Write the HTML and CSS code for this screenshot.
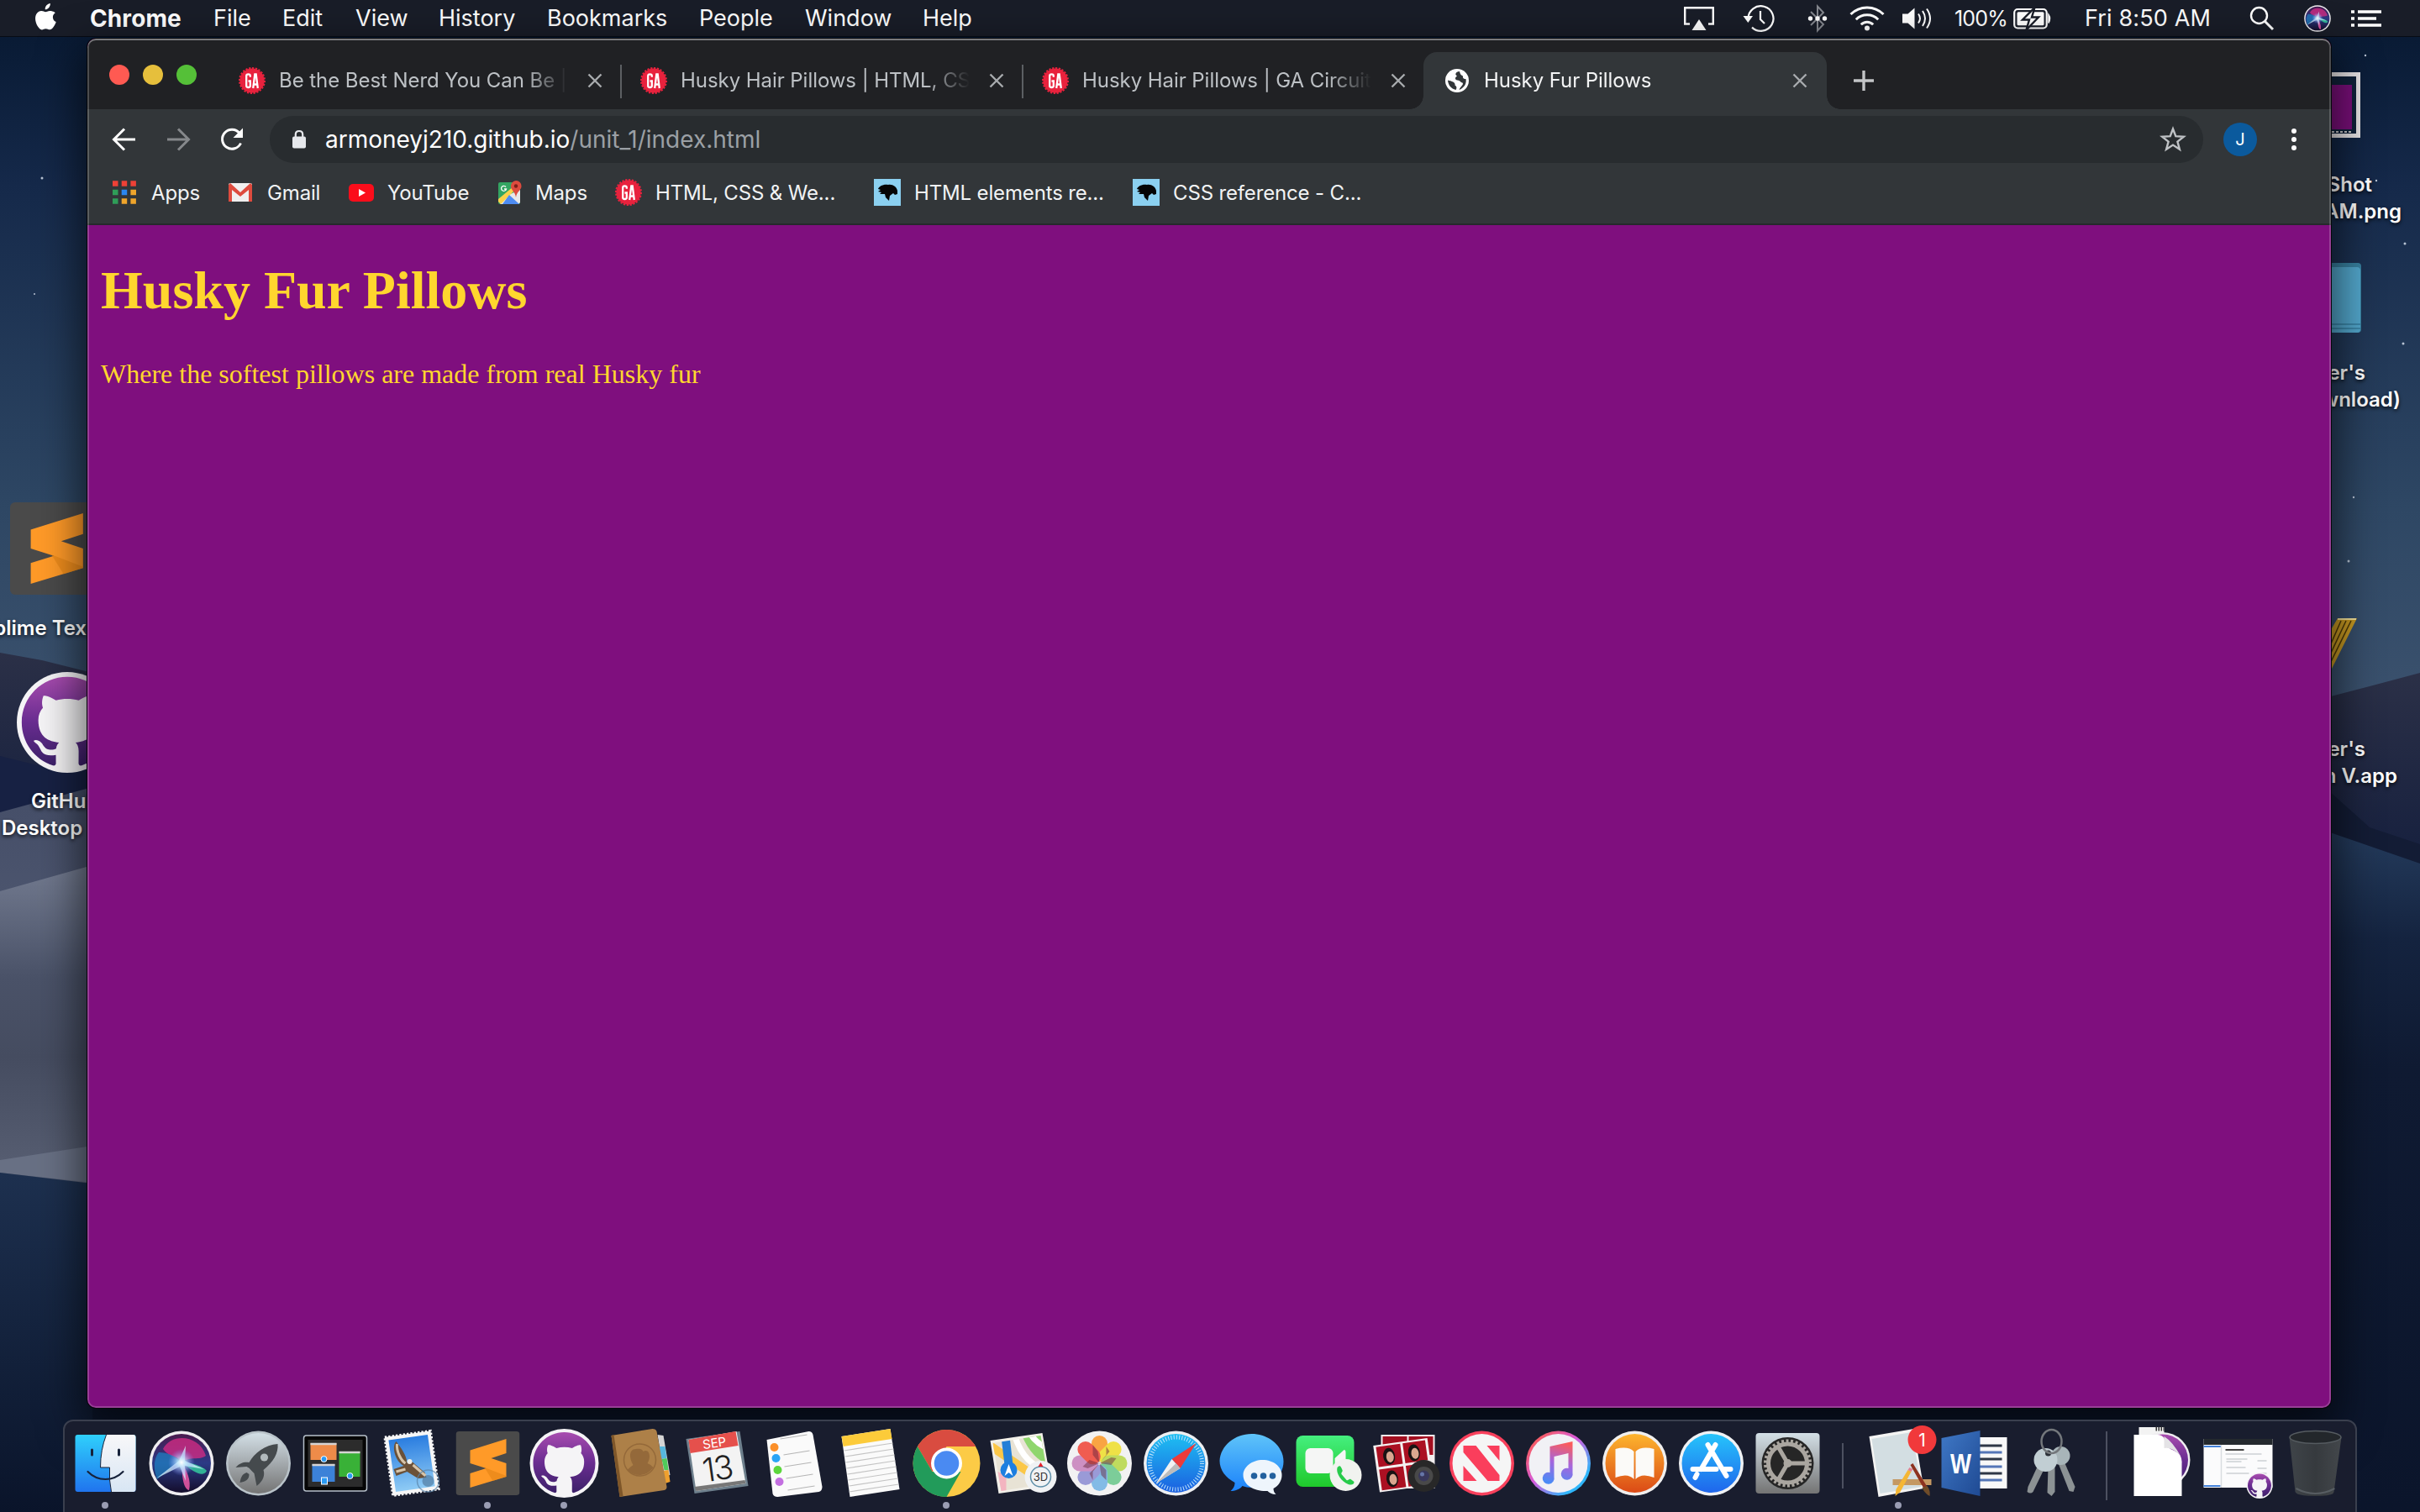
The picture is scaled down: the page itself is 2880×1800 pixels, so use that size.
FILE: index.html
```html
<!DOCTYPE html>
<html lang="en">
<head>
<meta charset="utf-8">
<title>Husky Fur Pillows</title>
<link rel="stylesheet" href="styles.css">
</head>
<body>
<svg class="defs" width="0" height="0">
  <defs>
    <linearGradient id="finderBlue" x1="0" y1="0" x2="0" y2="1"><stop offset="0" stop-color="#2fd0fc"/><stop offset="1" stop-color="#2074ee"/></linearGradient>
    <linearGradient id="finderWhite" x1="0" y1="0" x2="0" y2="1"><stop offset="0" stop-color="#f8f7f9"/><stop offset="1" stop-color="#d8e6f4"/></linearGradient>
    <linearGradient id="silver" x1="0" y1="0" x2="0" y2="1"><stop offset="0" stop-color="#d3dfe6"/><stop offset="1" stop-color="#747474"/></linearGradient>
    <linearGradient id="purple" x1="0" y1="0" x2="0" y2="1"><stop offset="0" stop-color="#a84caf"/><stop offset=".5" stop-color="#6a2d91"/><stop offset="1" stop-color="#3c2069"/></linearGradient>
    <linearGradient id="sky" x1="0" y1="0" x2="0" y2="1"><stop offset="0" stop-color="#2a7de0"/><stop offset="1" stop-color="#8ecbf5"/></linearGradient>
    <linearGradient id="orangeBook" x1="0" y1="0" x2="0" y2="1"><stop offset="0" stop-color="#fdb52e"/><stop offset="1" stop-color="#db4a16"/></linearGradient>
    <linearGradient id="store" x1="0" y1="0" x2="0" y2="1"><stop offset="0" stop-color="#26c4fb"/><stop offset="1" stop-color="#1f66ec"/></linearGradient>
    <linearGradient id="msg" x1="0" y1="0" x2="0" y2="1"><stop offset="0" stop-color="#5fc4f9"/><stop offset="1" stop-color="#1b82fb"/></linearGradient>
    <linearGradient id="face" x1="0" y1="0" x2="0" y2="1"><stop offset="0" stop-color="#45ef7f"/><stop offset="1" stop-color="#1fc92b"/></linearGradient>
    <linearGradient id="ringTunes" x1="0" y1="0" x2="1" y2="1"><stop offset=".1" stop-color="#fb5b52"/><stop offset=".45" stop-color="#d65bdc"/><stop offset=".8" stop-color="#2fb6fb"/></linearGradient>
    <linearGradient id="note" x1=".6" y1="0" x2=".4" y2="1"><stop offset="0" stop-color="#fb5b5b"/><stop offset=".5" stop-color="#a566dd"/><stop offset="1" stop-color="#4a8bf6"/></linearGradient>
    <linearGradient id="trash" x1="0" y1="0" x2="1" y2="0"><stop offset="0" stop-color="#3f4449"/><stop offset=".5" stop-color="#363a3e"/><stop offset="1" stop-color="#43474b"/></linearGradient>
    <linearGradient id="word" x1="0" y1="0" x2="1" y2="1"><stop offset="0" stop-color="#3f78c6"/><stop offset="1" stop-color="#1f4a93"/></linearGradient>
    <linearGradient id="safari" x1="0" y1="0" x2="0" y2="1"><stop offset="0" stop-color="#1ec0f2"/><stop offset="1" stop-color="#1b5fe0"/></linearGradient>
    <linearGradient id="siri" x1="0" y1="0" x2="0" y2="1"><stop offset="0" stop-color="#4a1b4e"/><stop offset=".5" stop-color="#2b3a86"/><stop offset="1" stop-color="#140d2b"/></linearGradient>
    <radialGradient id="glow" cx=".5" cy=".5" r=".5"><stop offset="0" stop-color="#fff"/><stop offset=".3" stop-color="#c9ecff" stop-opacity=".8"/><stop offset="1" stop-color="#7f8cff" stop-opacity="0"/></radialGradient>
    <symbol id="github" viewBox="0 0 82 82" overflow="visible">
      <circle cx="41" cy="41" r="41" fill="#f5f4f6"/>
      <path transform="translate(4 4) scale(4.625)" fill="url(#purple)" d="M8 0C3.58 0 0 3.58 0 8c0 3.54 2.29 6.53 5.47 7.59.4.07.55-.17.55-.38 0-.19-.01-.82-.01-1.49-2.01.37-2.53-.49-2.69-.94-.09-.23-.48-.94-.82-1.13-.28-.15-.68-.52-.01-.53.63-.01 1.08.58 1.23.82.72 1.21 1.87.87 2.33.66.07-.52.28-.87.51-1.07-1.78-.2-3.64-.89-3.64-3.95 0-.87.31-1.59.82-2.15-.08-.2-.36-1.02.08-2.12 0 0 .67-.21 2.2.82.64-.18 1.32-.27 2-.27.68 0 1.36.09 2 .27 1.53-1.04 2.2-.82 2.2-.82.44 1.1.16 1.92.08 2.12.51.56.82 1.27.82 2.15 0 3.07-1.87 3.75-3.65 3.95.29.25.54.73.54 1.48 0 1.07-.01 1.93-.01 2.2 0 .21.15.46.55.38A8.013 8.013 0 0016 8c0-4.42-3.58-8-8-8z"/>
    </symbol>
    <symbol id="siriball" viewBox="0 0 78 78" overflow="visible">
      <circle cx="39" cy="39" r="38.500" fill="#efeef0"/>
      <circle cx="39" cy="39" r="35" fill="url(#siri)"/>
      <path d="M17 22C26 3 60 4 68 30 60 36 50 30 39 38 34 28 26 34 17 22z" fill="#d92c86" opacity=".75"/>
      <path d="M38 38C24 44 14 56 10 58 6 48 5 34 12 26 22 26 32 30 38 38z" fill="#1f83c4" opacity=".7"/>
      <path d="M40 38c10 0 24 4 29 10-4 8-16 2-29-10z" fill="#34d3a0" opacity=".8"/>
      <path d="M39 38c6 8 12 22 9 33-8-2-8-20-9-33z" fill="#ee5aa8" opacity=".85"/>
      <path d="M9 57L36 36 44 18 43 36 66 46 43 42 44 60 37 43z" fill="#d5f4ff" opacity=".75"/>
      <circle cx="39" cy="38" r="16" fill="url(#glow)"/>
    </symbol>
    <symbol id="ga" viewBox="0 0 32 32" overflow="visible">
      <circle cx="16" cy="16" r="14.600" fill="#e8223d"/>
      <circle cx="16" cy="16" r="15" fill="none" stroke="#e8223d" stroke-width="2" stroke-dasharray="2.300 1.600"/>
      <g fill="none" stroke="#fff" stroke-width="2.300"><path d="M13.800 11.800V10.400Q13.800 8.300 11.500 8.300T9.200 10.400V22Q9.200 24 11.500 24T13.800 22V16.500H11.500"/><path d="M17.200 25L19.300 8.500H20.700L22.800 25M18 20.500H22"/></g>
    </symbol>
    <symbol id="mdn" viewBox="0 0 32 32">
      <rect width="32" height="32" fill="#8bd0f0"/>
      <path d="M5 12C6 9 11 6 17 7 22 6 27 9 28 14L28 18 25 19 23 17 19 20 18 26 14 22 13 18 7 18 9 16 5 15 8 13z" fill="#050505"/>
    </symbol>
    <symbol id="sublime" viewBox="0 0 76 76">
      <rect width="76" height="76" rx="4" fill="#4a4a4a"/>
      <path d="M17 22.500L60 9V26L42 32 60 38V54L17 67V50L36 44 17 38z" fill="#ff9a28"/>
      <path d="M34 43L60 53V54L44 59z" fill="#e28314" opacity=".6"/>
    </symbol>
  </defs>
</svg>

<div class="desktop">
  <svg class="wallpaper" viewBox="0 0 2880 1800">
    <defs>
      <linearGradient id="night" x1="0" y1="0" x2="0" y2="1"><stop offset="0" stop-color="#06172f"/><stop offset=".2" stop-color="#15294a"/><stop offset=".55" stop-color="#2e4764"/><stop offset=".8" stop-color="#3d536f"/><stop offset="1" stop-color="#465b76"/></linearGradient>
      <linearGradient id="hill" x1="0" y1="0" x2="0" y2="1"><stop offset="0" stop-color="#2b3047"/><stop offset="1" stop-color="#151f3e"/></linearGradient>
      <linearGradient id="dune" x1="0" y1="0" x2="0" y2="1"><stop offset="0" stop-color="#454e68"/><stop offset="1" stop-color="#5b647b"/></linearGradient>
      <linearGradient id="dune2" x1="0" y1="0" x2="0" y2="1"><stop offset="0" stop-color="#737b90"/><stop offset=".35" stop-color="#4a5268"/><stop offset=".6" stop-color="#454c60"/><stop offset="1" stop-color="#596074"/></linearGradient>
      <linearGradient id="shadeL" x1="0" y1="0" x2="0" y2="1"><stop offset="0" stop-color="#1d304f"/><stop offset="1" stop-color="#0a142a"/></linearGradient>
      <linearGradient id="shadeR" x1="0" y1="0" x2="0" y2="1"><stop offset="0" stop-color="#243b5c"/><stop offset=".16" stop-color="#14233f"/><stop offset=".35" stop-color="#0f1a32"/><stop offset="1" stop-color="#0b152b"/></linearGradient>
    </defs>
    <rect width="2880" height="1100" fill="url(#night)"/>
    <path d="M0 777L50 786 110 801V1000H0z" fill="url(#hill)"/>
    <path d="M0 900L60 915 110 905V1000H0z" fill="#172143"/>
    <path d="M0 967L110 937V1410H0z" fill="url(#dune)"/>
    <path d="M0 1061L110 1030V1410H0z" fill="url(#dune2)"/>
    <path d="M0 1381L110 1364V1408L0 1396z" fill="#687084"/>
    <path d="M0 1396L110 1409V1800H0z" fill="url(#shadeL)"/>
    <path d="M2770 830L2820 817 2880 801V1040L2770 1000z" fill="url(#hill)"/>
    <path d="M2770 940L2820 985 2880 1005V1040L2770 1010z" fill="#131c35"/>
    <path d="M110 1650H2770V990L2880 1028V1800H110z" fill="url(#shadeR)"/>
    <g fill="#b8c4d4"><circle cx="50" cy="212" r="1.500"/><circle cx="2862" cy="290" r="1.500"/><circle cx="2860" cy="409" r="1.500"/><circle cx="2795" cy="668" r="1.500"/><circle cx="41" cy="350" r="1"/><circle cx="2815" cy="66" r="1.200"/><circle cx="2801" cy="592" r="1.200"/><circle cx="2828" cy="215" r="1.200"/></g>
  </svg>

  <svg class="icon sublime-icon" width="110" height="110"><use href="#sublime"/></svg>
  <div class="label sublime-label">Sublime Text</div>
  <svg class="icon github-icon" width="120" height="120"><use href="#github"/></svg>
  <div class="label github-label"><span>GitHub</span><br>Desktop</div>

  <svg class="icon right-icons" viewBox="2700 60 180 760" width="180" height="760">
    <rect x="2700" y="86" width="109" height="78" fill="#e6e3e4"/><rect x="2700" y="91" width="104" height="68" fill="#10223a"/><rect x="2700" y="101" width="99" height="53" fill="#7a0f7a"/>
    <path d="M2700 157H2798" stroke="#c9c9c9" stroke-width="2" stroke-dasharray="3 2"/>
    <rect x="2700" y="313" width="110" height="83" rx="4" fill="#377f9e"/><rect x="2700" y="318" width="109" height="78" rx="4" fill="#52a6cb"/><path d="M2700 386H2809M2700 391H2809" stroke="#357e9f" stroke-width="1.500"/>
    <path d="M2782 736H2805L2768 810V760z" fill="#c89a22"/><path d="M2786 739L2768 780M2792 739L2768 790M2798 739L2768 800" stroke="#4e3a08" stroke-width="1.500"/><path d="M2782 737H2804" stroke="#f6e39a" stroke-width="2"/>
  </svg>
  <div class="label shot-label">Screen Shot<br><span>8.49.50 AM.png</span></div>
  <div class="label folder-label">Jennifer's<br><span>(Download)</span></div>
  <div class="label app-label">Jennifer's<br><span>Design V.app</span></div>
</div>

<header class="menubar">
  <nav class="menus">
    <svg class="apple" width="28" height="34" viewBox="0 0 28 34"><path fill="#fff" d="M19.800 1C20 3 19.300 4.800 18.100 6.200 16.900 7.500 15.300 8.400 13.700 8.300 13.500 6.400 14.400 4.500 15.400 3.300 16.600 2 18.400 1.100 19.800 1zM25.800 12.200C24 13.400 22.900 15 22.900 17.400 22.900 20 24.400 22 26.700 22.900 26.200 24.800 25.100 27 23.700 29 22.500 30.700 21.200 32.300 19.200 32.300 17.300 32.300 16.700 31.200 14.500 31.200 12.300 31.200 11.600 32.300 9.800 32.400 7.900 32.400 6.400 30.500 5.200 28.800 2.600 25.100.7 18.400 3.300 13.800 4.600 11.500 6.900 10.100 9.300 10.100 11.200 10 12.900 11.300 14.100 11.300 15.200 11.300 17.300 9.800 19.700 10 20.700 10 23.800 10.400 25.800 12.200z"/></svg>
    <b>Chrome</b><span>File</span><span>Edit</span><span>View</span><span>History</span><span>Bookmarks</span><span>People</span><span>Window</span><span>Help</span>
  </nav>
  <div class="status">
    <svg width="40" height="32" viewBox="0 0 40 32"><path d="M9 22.500H3.200V3.200H36.800V22.500H31" fill="none" stroke="#fff" stroke-width="2.400"/><path d="M20 17L28.500 30H11.500z" fill="#fff"/></svg>
    <svg width="40" height="34" viewBox="0 0 40 34"><path d="M7.500 17A15 14.800 0 1 1 12 27.600" fill="none" stroke="#fff" stroke-width="2.200"/><path d="M1.500 14H13L7.300 22z" fill="#fff"/><path d="M22 8V18L27 23" fill="none" stroke="#fff" stroke-width="2.200"/></svg>
    <svg width="26" height="34" viewBox="0 0 26 34"><path d="M5 9L20 24 13 31.500V2.500L20 10 5 25" fill="none" stroke="#85888f" stroke-width="2"/><g fill="#fff"><circle cx="4.500" cy="17" r="2.700"/><circle cx="13" cy="17" r="2.700"/><circle cx="21.500" cy="17" r="2.700"/></g></svg>
    <svg width="42" height="32" viewBox="0 0 42 32"><g fill="none" stroke="#fff" stroke-width="3"><path d="M1.500 11A27.500 27.500 0 0 1 40.500 11M7.800 17.300A18.500 18.500 0 0 1 34.200 17.300M13.800 23.200A10 10 0 0 1 28.200 23.200"/></g><circle cx="21" cy="27.500" r="3" fill="#fff"/></svg>
    <svg width="36" height="28" viewBox="0 0 36 28"><path d="M1 8.500H7.500L15.500 1.500V26.500L7.500 19.500H1z" fill="#fff"/><path d="M20 8.500Q24 14 20 19.500M25 5Q31 14 25 23M30 2.500Q38 14 30 25.500" fill="none" stroke="#fff" stroke-width="2"/></svg>
    <span class="pct">100%</span>
    <svg width="46" height="26" viewBox="0 0 46 26"><rect x="1.200" y="2" width="38.500" height="22.500" rx="4" fill="none" stroke="#fff" stroke-width="2.200"/><path d="M42 8.500Q45 13 42 18.500z" fill="#fff" stroke="#fff" stroke-width="1.500"/><rect x="4.500" y="5.300" width="32" height="16" rx="1.500" fill="#fff"/><path d="M25.500 0L11 14.500H19L15.500 26.500 30 11.500H22z" fill="#fff" stroke="#191d28" stroke-width="2.400"/></svg>
    <span class="clock">Fri 8:50 AM</span>
    <svg width="30" height="30" viewBox="0 0 30 30"><circle cx="11.500" cy="11.500" r="9.500" fill="none" stroke="#fff" stroke-width="2.400"/><path d="M18.500 18.500L28 28" stroke="#fff" stroke-width="3"/></svg>
    <svg width="32" height="32"><use href="#siriball"/></svg>
    <svg width="38" height="22" viewBox="0 0 38 22"><path d="M1 3H5M1 11H5M1 19H5M9 3H37M9 11H31M9 19H37" stroke="#fff" stroke-width="3.600"/></svg>
  </div>
</header>

<main class="window">
  <div class="tabstrip">
    <div class="lights"><i class="red"></i><i class="yellow"></i><i class="green"></i></div>
    <div class="tab"><svg width="32" height="32"><use href="#ga"/></svg><span class="title">Be the Best Nerd You Can Be |</span><svg class="x" width="20" height="20"><path d="M2.500 2.500L17.500 17.500M17.500 2.500L2.500 17.500"/></svg></div>
    <div class="tab divided"><svg width="32" height="32"><use href="#ga"/></svg><span class="title">Husky Hair Pillows | HTML, CSS</span><svg class="x" width="20" height="20"><path d="M2.500 2.500L17.500 17.500M17.500 2.500L2.500 17.500"/></svg></div>
    <div class="tab divided"><svg width="32" height="32"><use href="#ga"/></svg><span class="title">Husky Hair Pillows | GA Circuits</span><svg class="x" width="20" height="20"><path d="M2.500 2.500L17.500 17.500M17.500 2.500L2.500 17.500"/></svg></div>
    <div class="tab active"><svg width="32" height="32" viewBox="0 0 32 32"><circle cx="16" cy="16" r="14" fill="#fff"/><path d="M19 5C14 5.500 13 9 16 10.500 13.500 12 13 15 16.500 15.500 20 15.500 20 18.500 22.500 18.500 24.500 21 20 22.500 18.500 27 25 24.500 27.500 19 26.500 14 24 14.500 22.500 13 23 10.500 21 10 19.500 8 19 5zM5 15.500C5.500 21.500 9 25.500 14.500 27 16.500 24 15 22.500 13.500 21.500 14.500 18 9.500 16.500 5 15.500z" fill="#323639"/></svg><span class="title">Husky Fur Pillows</span><svg class="x" width="20" height="20"><path d="M2.500 2.500L17.500 17.500M17.500 2.500L2.500 17.500"/></svg></div>
    <svg class="plus" width="26" height="26"><path d="M13 1V25M1 13H25" stroke="#c3c5c7" stroke-width="3.400"/></svg>
  </div>
  <div class="toolbar">
    <svg class="nav" width="32" height="32" viewBox="0 0 32 32"><path d="M29 16H4M16 3.500L3.500 16 16 28.500" fill="none" stroke="#fff" stroke-width="3"/></svg>
    <svg class="nav" width="32" height="32" viewBox="0 0 32 32"><path d="M3 16H28M16 3.500L28.500 16 16 28.500" fill="none" stroke="#85888b" stroke-width="3"/></svg>
    <svg class="nav" width="32" height="32" viewBox="0 0 32 32"><path d="M26.500 20.500A11.500 11.500 0 1 1 25 8.500" fill="none" stroke="#fff" stroke-width="3"/><path d="M29 2.500V14H17.500z" fill="#fff"/></svg>
    <div class="omnibox">
      <svg width="18" height="24" viewBox="0 0 18 24"><rect x="1" y="8.500" width="16" height="14" rx="2" fill="#e6e8ec"/><path d="M4.800 10V6Q4.800 2 9 2T13.200 6V10" fill="none" stroke="#e6e8ec" stroke-width="2.200"/></svg>
      <span class="url">armoneyj210.github.io<em>/unit_1/index.html</em></span>
      <svg class="star" width="32" height="32" viewBox="0 0 32 32"><path d="M16 3.500L19.300 12.200 28.800 12.700 21.400 18.600 23.900 27.800 16 22.600 8.100 27.800 10.600 18.600 3.200 12.700 12.700 12.200z" fill="none" stroke="#bfc2c5" stroke-width="2.400"/></svg>
    </div>
    <div class="avatar">J</div>
    <svg class="dots" width="8" height="28"><g fill="#fff"><circle cx="4" cy="4" r="3"/><circle cx="4" cy="14" r="3"/><circle cx="4" cy="24" r="3"/></g></svg>
  </div>
  <div class="bookmarks">
    <a class="b1"><svg width="28" height="28" viewBox="0 0 28 28"><path d="M0 3.500H28" stroke="#ee4136" stroke-width="6.500" stroke-dasharray="6.500 4.200"/><path d="M0 14H6.500" stroke="#2f9e58" stroke-width="6.500"/><path d="M10.700 14H17.200" stroke="#2a86f0" stroke-width="6.500"/><path d="M21.400 14H28" stroke="#efa52b" stroke-width="6.500"/><path d="M0 24.500H6.500" stroke="#2f9e58" stroke-width="6.500"/><path d="M10.700 24.500H28" stroke="#efa52b" stroke-width="6.500" stroke-dasharray="6.500 4.200"/></svg>Apps</a>
    <a class="b2"><svg width="28" height="22" viewBox="0 0 28 22"><rect width="28" height="22" rx="2" fill="#f0efef"/><path d="M0 22V2L2 0 14 11 26 0 28 2V22H24V8L14 16 4 8V22z" fill="#dd4b3e"/></svg>Gmail</a>
    <a class="b3"><svg width="30" height="21" viewBox="0 0 30 21"><rect width="30" height="21" rx="5" fill="#fb0d1b"/><path d="M12 6L20 10.500 12 15z" fill="#fff"/></svg>YouTube</a>
    <a class="b4"><svg width="28" height="30" viewBox="0 0 28 30"><rect y="3" width="26" height="26" rx="2" fill="#33a562"/><path d="M26 27V12L12 18 2 29H24z" fill="#e8e8e8"/><path d="M0 26V23L18 8 22 10 3 29z" fill="#fbd14b"/><path d="M13 18L25 29H5z" fill="#4d8cf2"/><path d="M21 1A6.500 6.500 0 0 0 15 8C15 12 20 14 21 21 22 14 27.500 12 27.500 8A6.500 6.500 0 0 0 21 1z" fill="#dd4b3e"/><circle cx="21" cy="7.500" r="2.200" fill="#7c2019"/><path d="M9 8.500A3 3 0 1 0 9.500 11H7" fill="none" stroke="#fff" stroke-width="1.300"/></svg>Maps</a>
    <a class="b5"><svg width="32" height="32"><use href="#ga"/></svg>HTML, CSS &amp; We...</a>
    <a class="b6"><svg width="32" height="32"><use href="#mdn"/></svg>HTML elements re...</a>
    <a class="b7"><svg width="32" height="32"><use href="#mdn"/></svg>CSS reference - C...</a>
  </div>
  <article class="page">
    <h1>Husky Fur Pillows</h1>
    <p>Where the softest pillows are made from real Husky fur</p>
  </article>
</main>

<footer class="dock">
  <div class="slot on"><svg viewBox="-45.500 -52 91 110"><rect x="-36" y="-34" width="72" height="68" rx="3" fill="url(#finderBlue)"/><path d="M1-34Q-6-16-6 5H5Q4 20 7 34H33Q36 34 36 31V-31Q36-34 33-34z" fill="url(#finderWhite)"/><path d="M-16-16V-10M16-16V-10" stroke="#17223a" stroke-width="3" stroke-linecap="round"/><path d="M-21 10Q-12 19 0 19T21 10" fill="none" stroke="#17223a" stroke-width="2.200" stroke-linecap="round"/><path d="M1-34Q-6-16-6 5H5Q4 20 7 34" fill="none" stroke="#17223a" stroke-width="1"/></svg></div>
  <div class="slot"><svg viewBox="-45.500 -52 91 110"><use href="#siriball" x="-39.500" y="-39" width="78" height="78"/></svg></div>
  <div class="slot"><svg viewBox="-45.500 -52 91 110"><circle r="38.500" fill="#b9c3c9"/><circle r="36" fill="url(#silver)"/><path d="M23-23C8-22-5-12-11-1-16-2-22-1-27 5L-14 4Q-11 5-8 9L-5 12-2 27C6 21 8 14 6 8 18-2 24-12 23-23zM-14 11C-20 13-21 18-22 23-16 22-11 20-11 13z" fill="#454a4d"/><circle cx="7" cy="-7" r="4.600" fill="#b2babd"/></svg></div>
  <div class="slot"><svg viewBox="-45.500 -52 91 110"><rect x="-37" y="-33" width="75" height="66" rx="3" fill="#060606" stroke="#b6c0ca" stroke-width="1.500"/><rect x="-32" y="-28" width="65" height="56" fill="#2c2c2c"/><rect x="-29" y="-24" width="31" height="20" fill="#ee8b49"/><rect x="5" y="-14" width="25" height="30" fill="#39b137"/><rect x="-27" y="1" width="27" height="21" fill="#3c82d8"/><path d="M-29-23H2M5-13H30M-27 2H0" stroke="#d6d4d4" stroke-width="2.400"/><g fill="#2a9bf4" stroke="#fff" stroke-width="1"><circle cx="-13" cy="-5" r="3.500"/><circle cx="18" cy="15" r="3.500"/><rect x="-16" y="17" width="7" height="8"/></g></svg></div>
  <div class="slot"><svg viewBox="-45.500 -52 91 110"><g transform="rotate(-8)"><rect x="-27" y="-35" width="55" height="70" fill="#f6f6f6" stroke="#f6f6f6" stroke-width="3" stroke-dasharray="2.400 2"/><rect x="-23" y="-31" width="47" height="62" fill="url(#sky)"/></g><path d="M-18-26C-24-20-19-2-9 3L-21 7-18 15-5 10 8 18 18 17 16 11 2-1C-2-4-4-1-5-1-6-10-12-18-18-26z" fill="#6b5138"/><path d="M-17-23C-18-14-12-3-7 0M2 2L17 15M-18 10L-7 7" stroke="#d7c5aa" stroke-width="3" fill="none"/><circle cx="-2" cy="-2" r="3" fill="#f1efe9"/><circle cx="20" cy="21" r="13" fill="none" stroke="#5b84a8" stroke-width="1.500" opacity=".7"/><circle cx="20" cy="21" r="7" fill="#50789b" opacity=".65"/></svg></div>
  <div class="slot on"><svg viewBox="-45.500 -52 91 110"><use href="#sublime" x="-38" y="-38" width="76" height="76"/></svg></div>
  <div class="slot on"><svg viewBox="-45.500 -52 91 110"><use href="#github" x="-41" y="-41" width="82" height="82"/></svg></div>
  <div class="slot"><svg viewBox="-45.500 -52 91 110"><path d="M20-34L27-33 35 14 28 15z" fill="#d5d5d5"/><path d="M22-20L29-20 31-6 24-5z" fill="#57b7dd"/><path d="M25-5L31-6 33 8 28 8z" fill="#4fca5b"/><path d="M26 9L33 8 35 22 29 24z" fill="#efa02e"/><path d="M-35-33L14-41Q18-41 19-38L31 28Q31 31 28 32L-25 40z" fill="#ad8048"/><path d="M-35-33L-32-34-21 39-25 40z" fill="#7e5629"/><circle cx="-1" cy="-4" r="19" fill="none" stroke="#94693a" stroke-width="1.500"/><path d="M-16 8Q-12 4-9 2C-15-8-13-17-6-17 0-18 2-16 3-14 10-18 13-8 8 0Q13 2 15 5 8 14-1 14-10 14-16 8z" fill="#94693a"/></svg></div>
  <div class="slot"><svg viewBox="-45.500 -52 91 110"><path d="M-37-29L27-38 37 27-27 36z" fill="#6e808d"/><path d="M-34-28L23-38 34 24-25 33z" fill="#f3f3f3"/><path d="M-27 28L33 20 34 24-25 33z" fill="#777"/><path d="M-34-28L22-38 25-21-32-12z" fill="#e5504c"/><g transform="rotate(-8)" text-anchor="middle"><text x="0" y="-19" class="cal-m">SEP</text><text x="-1" y="20" class="cal-d">13</text></g></svg></div>
  <div class="slot"><svg viewBox="-45.500 -52 91 110"><path d="M-32-28L18-38Q22-38 23-34L34 28Q34 33 30 34L-19 40Q-24 40-25 36z" fill="#fafafa"/><path d="M-16-29L16-34M-12-10L19-15M-11 4L21-1M-9 18L23 13M-7 32L25 27" stroke="#b5b5b5" stroke-width="1.200"/><circle cx="-23" cy="-19" r="5" fill="#fb8f29"/><circle cx="-21" cy="-6" r="5" fill="#2aa4f5"/><circle cx="-19" cy="8" r="5" fill="#5cd63c"/><circle cx="-17" cy="22" r="5" fill="#c36fe0"/></svg></div>
  <div class="slot"><svg viewBox="-45.500 -52 91 110"><path d="M-34-32L24-41 35 31-24 40z" fill="#fafafa"/><path d="M-34-32L24-41 26-29-32-20z" fill="#fccb3a"/><path d="M-31-15L27-24M-30-8L28-17M-29-1L29-10M-28 6L30-3M-27 13L31 4M-26 20L32 11M-25 27L33 18M-25 34L34 25" stroke="#c4c4c4" stroke-width="1.200"/></svg></div>
  <div class="slot on"><svg viewBox="-45.500 -52 91 110"><circle r="40" fill="#fccb46"/><path d="M-34.600-20A40 40 0 0 1 34.600-20H0L-17 10z" fill="#d94c40"/><path d="M-34.600-20A40 40 0 0 0 0 40L17 10H-17z" fill="#229b5a"/><circle r="18.500" fill="#fff"/><circle r="14.800" fill="#4a8af2"/></svg></div>
  <div class="slot"><svg viewBox="-45.500 -52 91 110"><path d="M-39-27L23-36 34 27-29 36z" fill="#f2f0e9"/><clipPath id="mapclip"><path d="M-36-24L21-33 31 24-26 33z"/></clipPath><g clip-path="url(#mapclip)"><rect x="-45" y="-45" width="90" height="90" fill="#e8e3d5"/><path d="M-4-40H40V4Q10 0-4-40z" fill="#8fd66d"/><path d="M-12-40Q0 8 40 10M6-40Q15-20 40-15" fill="none" stroke="#fff" stroke-width="7"/><path d="M-45-25L35 30" stroke="#fbc747" stroke-width="10"/><path d="M-22-40L-16 10" stroke="#247fd7" stroke-width="10"/><path d="M-40 5L-20 15V40H-45z" fill="#f3b4c0"/></g><circle cx="-17" cy="8" r="10" fill="#1d7fe0"/><path d="M-17 1L-12 15-17 11-22 15z" fill="#fff"/><circle cx="21" cy="16" r="19" fill="#f0f2f4"/><circle cx="21" cy="16" r="12" fill="none" stroke="#5e8fa9" stroke-width="1.500"/><path d="M21-1L24 4H18z" fill="#e2222b"/><text x="21" y="20.500" class="d3">3D</text></svg></div>
  <div class="slot"><svg viewBox="-45.500 -52 91 110"><circle r="38.500" fill="#f2f2f3"/><g opacity=".88"><rect x="-9.500" y="-33" width="19" height="31" rx="9.500" fill="#fb9a2b"/><rect x="-9.500" y="-33" width="19" height="31" rx="9.500" fill="#efdf2f" transform="rotate(45)"/><rect x="-9.500" y="-33" width="19" height="31" rx="9.500" fill="#b9d84a" transform="rotate(90)"/><rect x="-9.500" y="-33" width="19" height="31" rx="9.500" fill="#6cc98d" transform="rotate(135)"/><rect x="-9.500" y="-33" width="19" height="31" rx="9.500" fill="#74b4e5" transform="rotate(180)"/><rect x="-9.500" y="-33" width="19" height="31" rx="9.500" fill="#8e8fd4" transform="rotate(225)"/><rect x="-9.500" y="-33" width="19" height="31" rx="9.500" fill="#c983bd" transform="rotate(270)"/><rect x="-9.500" y="-33" width="19" height="31" rx="9.500" fill="#f0483b" transform="rotate(315)"/></g><path d="M0 0L-8-10V-22L-2-14zM0 0L8-10V-20L12-14zM0 0L14-7 20-6 14 2zM0 0L8 8V20L2 14zM0 0L-8 10V20L-12 12zM0 0L-14 6-20 4-12-4z" fill="#6b2940" opacity=".5"/></svg></div>
  <div class="slot"><svg viewBox="-45.500 -52 91 110"><circle r="38.500" fill="#edeff1"/><circle r="35" fill="url(#safari)"/><circle r="31" fill="none" stroke="#bfe4fb" stroke-width="5" stroke-dasharray="1 2.250"/><path d="M24-24L5 6-5-5z" fill="#ec3b3b"/><path d="M-24 24L5 6-5-5z" fill="#f2f2f2"/><path d="M-24 24L5 6 0 0z" fill="#bcbcbc"/></svg></div>
  <div class="slot"><svg viewBox="-45.500 -52 91 110"><path d="M-1-35C20-35 37-20 37-2S20 29 0 29C-5 29-9 28-12 27-15 31-21 33-26 33-22 30-21 26-21 23-32 17-39 8-39-3-38-21-21-35-1-35z" fill="url(#msg)"/><path d="M12-4C25-4 35 4 35 14 35 21 31 27 25 30 25 33 26 35 28 37 23 37 20 35 18 33 4 34-11 27-11 14-11 4 0-4 12-4z" fill="#eef5fc"/><g fill="#22609e"><circle cx="2" cy="15" r="3.800"/><circle cx="13" cy="15" r="3.800"/><circle cx="24" cy="15" r="3.800"/></g></svg></div>
  <div class="slot"><svg viewBox="-45.500 -52 91 110"><rect x="-39" y="-33" width="69" height="61" rx="8" fill="url(#face)"/><rect x="-28" y="-18" width="33" height="30" rx="6" fill="#f5f6f5"/><path d="M7-6L18-16Q20-16 20-13V6L7 2z" fill="#f5f6f5"/><circle cx="20" cy="14" r="19" fill="#f1f3ef"/><path d="M10 5C13 2 14 3 16 8 17 10 14 11 15 13L21 20C23 21 24 18 26 19L30 22C30 26 26 26 23 25 15 22 8 12 10 5z" fill="#27cb4a"/></svg></div>
  <div class="slot"><svg viewBox="-45.500 -52 91 110"><rect x="-29" y="-34" width="64" height="64" fill="#f2eeee"/><path d="M-27-32H2V0H-27zM4-32H33V-10H4z" fill="#a30f20"/><g transform="rotate(-8)"><rect x="-35" y="-26" width="65" height="56" fill="#f4f1f1"/><path d="M-32-24H-3V0H-32zM0-24H27V0H0zM-32 3H-3V28H-32zM0 3H27V28H0z" fill="#ab1022"/><g fill="#181313"><ellipse cx="-18" cy="-11" rx="7" ry="10"/><ellipse cx="12" cy="-11" rx="7" ry="10"/><ellipse cx="-18" cy="16" rx="7" ry="10"/></g><g fill="#dba68f"><ellipse cx="-17" cy="-10" rx="4.500" ry="6.500"/><ellipse cx="13" cy="-10" rx="4.500" ry="6.500"/><ellipse cx="-17" cy="17" rx="4.500" ry="6.500"/></g></g><circle cx="22" cy="15" r="19" fill="#282828"/><circle cx="22" cy="15" r="11" fill="#494949"/><circle cx="22" cy="15" r="6.500" fill="#39385c"/><circle cx="20" cy="13" r="2.500" fill="#6676a8"/></svg></div>
  <div class="slot"><svg viewBox="-45.500 -52 91 110"><circle r="38.500" fill="#f8405c"/><circle r="35" fill="#f5f5f5"/><path d="M-22-21H-7L21 14V21H7L-22-13zM6-21H21V-3zM-22 3L-6 21H-22z" fill="#fa3e5c"/></svg></div>
  <div class="slot"><svg viewBox="-45.500 -52 91 110"><circle r="38.500" fill="url(#ringTunes)"/><circle r="35" fill="#f1f1f5"/><path d="M-10-20L17-26V11A7 7 0 1 1 12 6V-12L-5-8V16A7 7 0 1 1-10 11z" fill="url(#note)"/></svg></div>
  <div class="slot"><svg viewBox="-45.500 -52 91 110"><circle r="38.500" fill="#f0efee"/><circle r="35" fill="url(#orangeBook)"/><path d="M-1-14Q-8-21-23-17V17Q-8 11-1 19zM1-14Q8-21 23-17V17Q8 11 1 19z" fill="#fbfaf8"/></svg></div>
  <div class="slot"><svg viewBox="-45.500 -52 91 110"><circle r="38.500" fill="#f0f2f4"/><circle r="35" fill="url(#store)"/><path d="M5-22L-12 7M-17 13L-19 17M-4-22L18 15M-22 7H6M15 7H23" stroke="#fff" stroke-width="6" stroke-linecap="round"/></svg></div>
  <div class="slot"><svg viewBox="-45.500 -52 91 110"><rect x="-38" y="-36" width="76" height="72" rx="4" fill="url(#silver)"/><circle r="31" fill="#262626"/><circle r="23" fill="none" stroke="#aaa6a0" stroke-width="5"/><circle r="26.500" fill="none" stroke="#aaa6a0" stroke-width="4" stroke-dasharray="3 2.550"/><path d="M0 0H22M0 0L-11-19M0 0L-11 19" stroke="#aaa6a0" stroke-width="5"/><circle r="5" fill="#aaa6a0"/></svg></div>
  <div class="rule short"></div>
  <div class="slot on"><svg viewBox="-45.500 -52 91 110"><path d="M-35-32L18-41 30 30-24 40z" fill="#f4f4f3"/><path d="M-32-29L16-37 27 28-22 36z" fill="#d3dee2"/><rect x="-7" y="19" width="46" height="7" fill="#c49862"/><path d="M-4 39L-3 31 11 8 15 10 2 34z" fill="#f5b633"/><path d="M11 8L13 5 17 7 15 10z" fill="#e28291"/><path d="M14 2L17 0 34 28 30 30z" fill="#8d321f"/><path d="M28 29L34 27Q38 32 37 39 31 36 28 29z" fill="#6f4c29"/><circle cx="28" cy="-28" r="17" fill="#f1393b"/><text x="28" y="-20.500" class="badge">1</text></svg></div>
  <div class="slot"><svg viewBox="-45.500 -52 91 110"><rect x="0" y="-31" width="38" height="61" fill="#f8f8f8"/><path d="M4-21H32M4-5H32M4 12H32" stroke="#2e3746" stroke-width="2.800"/><path d="M4-13H32M4 4H32M4 20H32" stroke="#5476b7" stroke-width="2.800"/><path d="M-40-30L6-39V39L-40 29z" fill="url(#word)"/><text x="-17" y="12" class="w" textLength="25" lengthAdjust="spacingAndGlyphs">W</text></svg></div>
  <div class="slot"><svg viewBox="-45.500 -52 91 110"><g fill="#8c9294"><path d="M-15 0L-7 3-22 34Q-25 37-29 34L-28 28z"/><path d="M-4 5H4V34L0 39-5 35z"/><path d="M8 0L15-2 28 28 26 34 21 33z"/></g><circle cx="11" cy="-9" r="11" fill="#a8b5b9"/><circle cx="-7" cy="-4" r="14" fill="#c1ced3"/><circle cx="-4" cy="-12" r="3.500" fill="#2a2f36"/><ellipse cx="0" cy="-26" rx="12" ry="14" fill="none" stroke="#73777b" stroke-width="2.500"/></svg></div>
  <div class="rule"></div>
  <div class="slot"><svg viewBox="-45.500 -52 91 110"><path d="M-28-43H2V-20H-28z" fill="#f3f3f3"/><path d="M-8-41H2" stroke="#333" stroke-width="5" stroke-dasharray="1.500 1.500"/><circle cx="0" cy="-4" r="33" fill="#efedf0"/><circle cx="0" cy="-4" r="30.500" fill="url(#purple)"/><path d="M-34-34H-6Q-1-34 2-30 4-18 14-15 24-10 23 0V39H-34z" fill="#fff"/><path d="M2-32V-18Q12-20 22-8 12-26 2-32z" fill="#e4e3e6"/></svg></div>
  <div class="slot"><svg viewBox="-45.500 -52 91 110"><rect x="-42" y="-29" width="82" height="58" fill="#fbfbfc"/><rect x="-42" y="-29" width="82" height="7" fill="#24292e"/><path d="M-42-20H-21M-42 27H-22" stroke="#4381d9" stroke-width="2"/><path d="M-21-22V29" stroke="#d9dce0" stroke-width="1.500"/><path d="M-16-16H6" stroke="#444" stroke-width="2"/><path d="M-16-11H27M-15-5H10M-15-2H3M22-3H33M-15 5H8M22 6H33M-15 12H12M24 12H33" stroke="#b6bbc0" stroke-width="1.200"/><use href="#github" x="9" y="11" width="31" height="31"/></svg></div>
  <div class="slot"><svg viewBox="-45.500 -52 91 110"><path d="M-31-31L-24 34Q-22 39 0 39T22 34L31-31z" fill="url(#trash)"/><ellipse cx="0" cy="-31" rx="30.500" ry="7.500" fill="#23272b" stroke="#555b60" stroke-width="1.500"/><path d="M-23 30Q0 42 23 30" fill="none" stroke="#5f656a" stroke-width="2" opacity=".8"/></svg></div>
</footer>
</body>
</html>
```
FILE: styles.css
```css
* { box-sizing: border-box; }
body { margin: 0; width: 2880px; height: 1800px; overflow: hidden; position: relative; background: #0a142a; font-family: Inter, "Liberation Sans", sans-serif; display: flex; flex-direction: column; }
svg { display: block; flex: none; }
.defs { position: absolute; }

.desktop { position: absolute; inset: 0; overflow: hidden; }
.wallpaper { width: 2880px; height: 1800px; }
.icon, .label { position: absolute; }
.label { color: #fff; font-size: 24px; font-weight: 600; line-height: 32px; white-space: nowrap; text-shadow: 0 2px 4px rgba(0,0,0,.8); }
.sublime-icon { left: 12px; top: 598px; }
.sublime-label { left: -38px; top: 732px; }
.github-icon { left: 20px; top: 800px; }
.github-label { left: 2px; top: 938px; }
.github-label span { padding-left: 35px; }
.right-icons { left: 2700px; top: 60px; }
.shot-label { right: 57px; top: 204px; text-align: right; }
.shot-label span { position: relative; left: 35px; }
.folder-label { right: 65px; top: 428px; text-align: right; }
.folder-label span { position: relative; left: 42px; }
.app-label { right: 65px; top: 876px; text-align: right; }
.app-label span { position: relative; left: 38px; }

.menubar { position: relative; flex: none; height: 44px; background: #191d28; border-bottom: 1px solid #070b14; display: flex; justify-content: space-between; color: #fff; font-size: 27px; }
.menus { display: grid; align-items: center; padding-left: 40px; grid-template-columns: 67px 147px 82px 87px 99px 129px 181px 126px 140px auto; }
.menus .apple { margin-top: -3px; }
.menus b { font-size: 28px; font-weight: 700; letter-spacing: .1px; }
.status { display: grid; align-items: center; width: 878px; grid-template-columns: 71px 77px 51px 62px 63px 70px 85px 196px 65px 55px auto; }
.pct { font-size: 25px; letter-spacing: -.8px; }
.clock { letter-spacing: .15px; }

.window { position: relative; flex: none; margin: 2px 106px 0 104px; height: 1630px; border-radius: 10px; display: flex; flex-direction: column; overflow: hidden; background: #7f0f7e; box-shadow: 0 0 0 1px #05070b, 0 20px 50px 8px rgba(0,0,0,.6); }
.window::after { content: ""; position: absolute; inset: 0; border-radius: 10px; box-shadow: inset 0 0 0 2px rgba(255,255,255,.2), inset 0 2px 0 0 rgba(255,255,255,.25); pointer-events: none; }

.tabstrip { height: 84px; flex: none; padding-top: 16px; background: #202124; display: flex; }
.lights { width: 156px; padding: 15px 0 0 26px; display: flex; gap: 16px; }
.lights i { width: 24px; height: 24px; border-radius: 50%; }
.red { background: #ff5a52; }
.yellow { background: #e6bf3c; }
.green { background: #55c038; }
.tab { position: relative; width: 478px; height: 68px; padding: 0 20px 0 24px; display: flex; align-items: center; color: #bdc1c5; font-size: 24px; }
.title { flex: 1; min-width: 0; margin: -2px 22px 0 16px; overflow: hidden; white-space: nowrap; letter-spacing: -.06px; -webkit-mask-image: linear-gradient(90deg, #000 85%, transparent); }
.tab.divided::before { content: ""; position: absolute; left: 0; top: 15px; width: 2px; height: 40px; background: #5c5f63; }
.x { stroke: #a8abae; stroke-width: 2.4; }
.tab.active { width: 480px; padding-right: 22px; background: #323639; border-radius: 16px 16px 0 0; color: #f3f4f5; }
.tab.active::before, .tab.active::after { content: ""; position: absolute; bottom: 0; width: 16px; height: 16px; }
.tab.active::before { left: -16px; background: radial-gradient(circle at 0 0, transparent 15.5px, #323639 16px); }
.tab.active::after { right: -16px; background: radial-gradient(circle at 100% 0, transparent 15.5px, #323639 16px); }
.plus { margin: 21px 0 0 31px; }

.toolbar { height: 72px; flex: none; background: #323639; display: flex; align-items: center; padding-left: 28px; }
.nav { margin-right: 32px; }
.omnibox { width: 2301px; height: 56px; margin-left: -3px; border-radius: 28px; background: #282c2f; display: flex; align-items: center; padding: 0 20px 0 26px; }
.url { flex: 1; margin-left: 22px; font-size: 28px; color: #fff; }
.url em { font-style: normal; color: #9ba0a5; }
.avatar { width: 40px; height: 40px; margin-left: 24px; border-radius: 50%; background: #0b5a9d; color: #fff; font-size: 20px; line-height: 40px; text-align: center; }
.dots { margin-left: 40px; }

.bookmarks { height: 66px; flex: none; background: #323639; border-bottom: 2px solid #26292b; display: flex; padding: 0 0 10px 30px; color: #f1f3f4; font-size: 24px; letter-spacing: -.15px; }
.bookmarks a { display: flex; align-items: center; gap: 18px; white-space: nowrap; }
.b1 { width: 138px; }
.b2 { width: 143px; }
.b3 { width: 178px; }
.b4 { width: 139px; }
.b5, .b6 { width: 308px; }
.bookmarks .b3, .bookmarks .b4, .bookmarks .b5, .bookmarks .b6, .bookmarks .b7 { gap: 16px; }

.page { flex: 1; padding: 0 16px; color: #ffd62e; font-family: "Liberation Serif", "Times New Roman", serif; }
.page h1 { margin: 41px 0 44px; font-size: 64px; line-height: 74px; }
.page p { margin: 0; font-size: 32px; line-height: 36px; }

.dock { position: relative; flex: none; margin: 14px 0 0 75px; width: 2730px; height: 122px; padding-left: 2.5px; border: 2px solid #3a3f4e; border-radius: 12px; background: #191d2e; display: flex; }
.slot { position: relative; width: 91px; height: 110px; margin-top: -2px; flex: none; }
.slot svg { width: 91px; height: 110px; overflow: visible; }
.slot.on::after { content: ""; position: absolute; left: 41px; top: 98px; width: 8px; height: 8px; border-radius: 50%; background: #9a9db3; }
.rule { width: 41px; flex: none; display: flex; justify-content: center; padding-top: 12px; }
.rule::before { content: ""; width: 2px; height: 82px; background: #4c5060; }
.rule.short { padding-top: 26px; }
.rule.short::before { height: 54px; }
.cal-m { font: 15px Inter, sans-serif; fill: #fff; }
.cal-d { font: 300 39px Inter, sans-serif; fill: #222; letter-spacing: -2px; }
.d3 { font: 13px Inter, sans-serif; fill: #333; text-anchor: middle; }
.badge { font: 21px Inter, sans-serif; fill: #fff; text-anchor: middle; }
.w { font: bold 34px "Liberation Sans", sans-serif; fill: #fff; text-anchor: middle; }
```
